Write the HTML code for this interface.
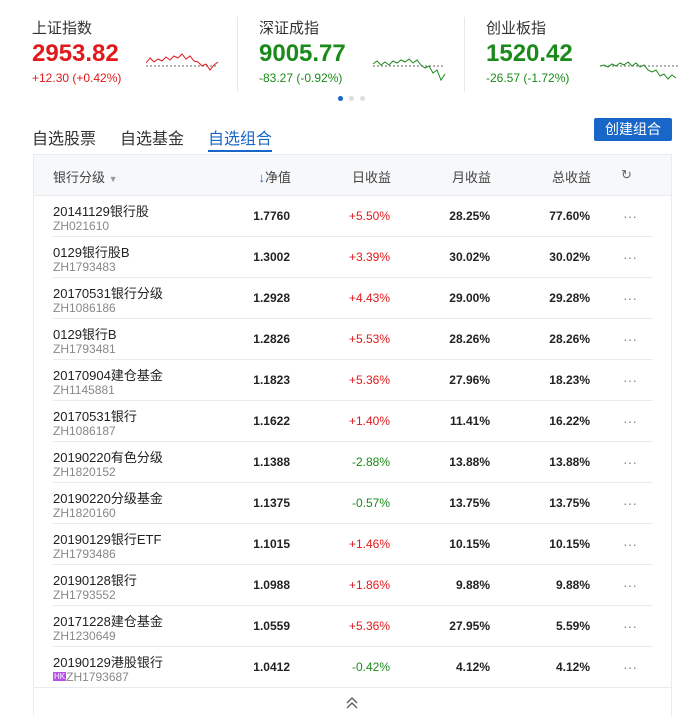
<!DOCTYPE html>
<html><head><meta charset="utf-8"><style>
*{margin:0;padding:0;box-sizing:border-box}
body{width:682px;height:716px;overflow:hidden;background:#fff;font-family:"Liberation Sans","Noto Sans CJK SC",sans-serif;color:#333;position:relative}
.idx{position:absolute;top:0}
.idx .n{position:absolute;left:0;top:17px;font-size:15px;color:#333;white-space:nowrap}
.idx .v{position:absolute;left:0;top:40px;font-size:24px;font-weight:bold;white-space:nowrap}
.idx .c{position:absolute;left:0;top:71px;font-size:12px;white-space:nowrap}
.idx svg{position:absolute;top:48px}
.red{color:#e0191b}.grn{color:#1a8a1a}
.sep{position:absolute;top:17px;width:1px;height:75px;background:#e8e8e8}
.dot{position:absolute;top:96px;width:5px;height:5px;border-radius:50%;background:#ddd}
.tab{position:absolute;top:125px;font-size:16px;color:#333}
.btn{position:absolute;left:594px;top:118px;width:78px;height:23px;background:#1866c7;color:#fff;font-size:14px;text-align:center;line-height:23px;border-radius:2px}
.tbl{position:absolute;left:33px;top:154px;width:639px;height:562px;border:1px solid #e8ecf0;border-bottom:none}
.hd{position:absolute;left:0;top:0;width:637px;height:41px;background:#f7f8fa;border-bottom:1px solid #e8ecf0;font-size:13px;color:#444}
.hd span{position:absolute;top:12px;white-space:nowrap}
.hd .r{width:80px;text-align:right}
.row{position:absolute;left:19px;width:600px;height:41px;border-bottom:1px solid #e8ecf0}
.row .nm{position:absolute;left:0;top:5px;font-size:13px;color:#222;white-space:nowrap}
.row .cd{position:absolute;left:0;top:23px;font-size:12px;color:#888;white-space:nowrap}
.row .x{position:absolute;top:13px;font-size:12px;font-weight:bold;text-align:right;width:80px;color:#222}
.row .d{position:absolute;top:13px;font-size:12px;text-align:right;width:80px}
.row .m{position:absolute;left:570px;top:12px;font-size:14px;color:#888}
</style></head><body>
<div class="idx" style="left:32px"><div class="n">上证指数</div><div class="v red">2953.82</div><div class="c red">+12.30 (+0.42%)</div>
<svg style="left:114px" width="74" height="26"><line x1="0" y1="18" x2="72" y2="18" stroke="#333" stroke-dasharray="2,2" stroke-width="0.8"/><polyline fill="none" stroke="#e0191b" stroke-width="1" points="0,15 4,10 8,14 12,11 16,13 20,9 24,12 28,8 32,10 36,6 40,11 44,8 48,13 52,14 56,18 60,16 64,22 68,17 72,14"/></svg></div>
<div class="sep" style="left:237px"></div>
<div class="idx" style="left:259px"><div class="n">深证成指</div><div class="v grn">9005.77</div><div class="c grn">-83.27 (-0.92%)</div>
<svg style="left:114px" width="74" height="40"><line x1="0" y1="18" x2="72" y2="18" stroke="#333" stroke-dasharray="2,2" stroke-width="0.8"/><polyline fill="none" stroke="#1a8a1a" stroke-width="1" points="0,16 4,13 8,17 12,14 16,17 20,13 24,15 28,12 32,14 36,11 40,15 44,12 48,17 52,20 56,18 60,25 64,22 68,32 72,26"/></svg></div>
<div class="sep" style="left:464px"></div>
<div class="idx" style="left:486px"><div class="n">创业板指</div><div class="v grn">1520.42</div><div class="c grn">-26.57 (-1.72%)</div>
<svg style="left:114px" width="80" height="40"><line x1="0" y1="18" x2="80" y2="18" stroke="#333" stroke-dasharray="2,2" stroke-width="0.8"/><polyline fill="none" stroke="#1a8a1a" stroke-width="1" points="0,18 4,17 8,19 12,16 16,18 20,15 24,17 28,14 32,18 36,15 40,19 44,17 48,22 52,24 56,22 60,28 64,26 68,31 72,27 76,30"/></svg></div>
<div class="dot" style="left:338px;background:#1866c7"></div><div class="dot" style="left:349px"></div><div class="dot" style="left:360px"></div>
<div class="tab" style="left:32px">自选股票</div>
<div class="tab" style="left:120px">自选基金</div>
<div class="tab" style="left:208px;color:#1866c7">自选组合</div>
<div style="position:absolute;left:208px;top:150px;width:64px;height:2px;background:#1866c7"></div>
<div class="btn">创建组合</div>
<div class="tbl">
<div class="hd"><span style="left:19px">银行分级 <span style="position:static;color:#999;font-size:9px">▼</span></span><span class="r" style="left:177px"><span style="position:static;color:#1866c7">↓</span>净值</span><span class="r" style="left:277px">日收益</span><span class="r" style="left:377px">月收益</span><span class="r" style="left:477px">总收益</span><span style="left:587px;color:#666">↻</span></div>
<div class="row" style="top:41px"><div class="nm">20141129银行股</div><div class="cd">ZH021610</div><div class="x" style="left:157px">1.7760</div><div class="d red" style="left:257px">+5.50%</div><div class="x" style="left:357px">28.25%</div><div class="x" style="left:457px">77.60%</div><div class="m">···</div></div>
<div class="row" style="top:82px"><div class="nm">0129银行股B</div><div class="cd">ZH1793483</div><div class="x" style="left:157px">1.3002</div><div class="d red" style="left:257px">+3.39%</div><div class="x" style="left:357px">30.02%</div><div class="x" style="left:457px">30.02%</div><div class="m">···</div></div>
<div class="row" style="top:123px"><div class="nm">20170531银行分级</div><div class="cd">ZH1086186</div><div class="x" style="left:157px">1.2928</div><div class="d red" style="left:257px">+4.43%</div><div class="x" style="left:357px">29.00%</div><div class="x" style="left:457px">29.28%</div><div class="m">···</div></div>
<div class="row" style="top:164px"><div class="nm">0129银行B</div><div class="cd">ZH1793481</div><div class="x" style="left:157px">1.2826</div><div class="d red" style="left:257px">+5.53%</div><div class="x" style="left:357px">28.26%</div><div class="x" style="left:457px">28.26%</div><div class="m">···</div></div>
<div class="row" style="top:205px"><div class="nm">20170904建仓基金</div><div class="cd">ZH1145881</div><div class="x" style="left:157px">1.1823</div><div class="d red" style="left:257px">+5.36%</div><div class="x" style="left:357px">27.96%</div><div class="x" style="left:457px">18.23%</div><div class="m">···</div></div>
<div class="row" style="top:246px"><div class="nm">20170531银行</div><div class="cd">ZH1086187</div><div class="x" style="left:157px">1.1622</div><div class="d red" style="left:257px">+1.40%</div><div class="x" style="left:357px">11.41%</div><div class="x" style="left:457px">16.22%</div><div class="m">···</div></div>
<div class="row" style="top:287px"><div class="nm">20190220有色分级</div><div class="cd">ZH1820152</div><div class="x" style="left:157px">1.1388</div><div class="d grn" style="left:257px">-2.88%</div><div class="x" style="left:357px">13.88%</div><div class="x" style="left:457px">13.88%</div><div class="m">···</div></div>
<div class="row" style="top:328px"><div class="nm">20190220分级基金</div><div class="cd">ZH1820160</div><div class="x" style="left:157px">1.1375</div><div class="d grn" style="left:257px">-0.57%</div><div class="x" style="left:357px">13.75%</div><div class="x" style="left:457px">13.75%</div><div class="m">···</div></div>
<div class="row" style="top:369px"><div class="nm">20190129银行ETF</div><div class="cd">ZH1793486</div><div class="x" style="left:157px">1.1015</div><div class="d red" style="left:257px">+1.46%</div><div class="x" style="left:357px">10.15%</div><div class="x" style="left:457px">10.15%</div><div class="m">···</div></div>
<div class="row" style="top:410px"><div class="nm">20190128银行</div><div class="cd">ZH1793552</div><div class="x" style="left:157px">1.0988</div><div class="d red" style="left:257px">+1.86%</div><div class="x" style="left:357px">9.88%</div><div class="x" style="left:457px">9.88%</div><div class="m">···</div></div>
<div class="row" style="top:451px"><div class="nm">20171228建仓基金</div><div class="cd">ZH1230649</div><div class="x" style="left:157px">1.0559</div><div class="d red" style="left:257px">+5.36%</div><div class="x" style="left:357px">27.95%</div><div class="x" style="left:457px">5.59%</div><div class="m">···</div></div>
<div class="row" style="top:492px;left:0;width:637px"><div class="nm" style="left:19px">20190129港股银行</div><div class="cd" style="left:19px"><span style="background:#b84ee8;color:#fff;font-size:8px;padding:0 1px;vertical-align:2px">HK</span>ZH1793687</div><div class="x" style="left:176px">1.0412</div><div class="d grn" style="left:276px">-0.42%</div><div class="x" style="left:376px">4.12%</div><div class="x" style="left:476px">4.12%</div><div class="m" style="left:589px">···</div></div>
<svg style="position:absolute;left:312px;top:542px" width="12" height="12"><polyline points="1,6 6,1 11,6" fill="none" stroke="#666" stroke-width="1.5"/><polyline points="1,11 6,6 11,11" fill="none" stroke="#666" stroke-width="1.5"/></svg>
</div>
</body></html>
